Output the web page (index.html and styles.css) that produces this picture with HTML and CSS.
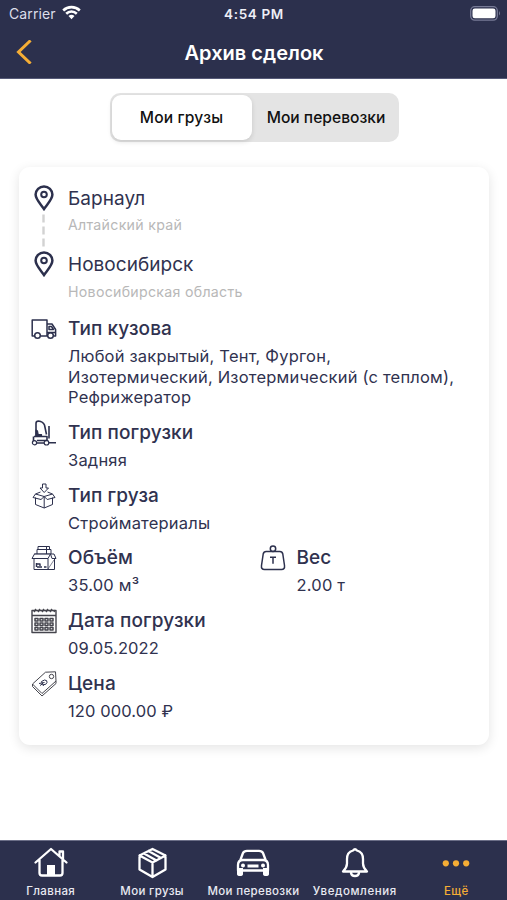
FILE: index.html
```html
<!DOCTYPE html>
<html lang="ru">
<head>
<meta charset="utf-8">
<meta name="viewport" content="width=device-width, initial-scale=1">
<title>Архив сделок</title>
<link rel="stylesheet" href="styles.css">
</head>
<body>
<header class="header">
  <div class="status">
    <div class="carrier"><span>Carrier</span>
      <svg width="19" height="15" viewBox="0 0 19 15" fill="#fff"><path d="M9.500 14.300l3-3.200a4.300 4.300 0 0 0-6 0z"/><g fill="none" stroke="#fff" stroke-width="2.600"><path d="M4.200 8.700a7.600 7.600 0 0 1 10.600 0"/><path d="M1.200 5.500a12 12 0 0 1 16.600 0"/></g></svg>
    </div>
    <span class="time">4:54 PM</span>
    <svg class="battery" width="31" height="15" viewBox="0 0 31 15"><rect x=".7" y=".7" width="26.600" height="13.400" rx="4" fill="none" stroke="#777a96" stroke-width="1.300"/><rect x="2.500" y="2.500" width="23" height="9.800" rx="2.300" fill="#fff"/><path d="M29 5q2 2.300 0 4.600z" fill="#777a96"/></svg>
  </div>
  <div class="titlebar">
    <svg class="back" width="16" height="24" viewBox="0 0 16 24"><path d="M13.500 1.500L2.500 12l11 10.500" fill="none" stroke="#f5ad35" stroke-width="3" stroke-linecap="square"/></svg>
    <h1>Архив сделок</h1>
  </div>
</header>

<main class="content">
  <div class="segments">
    <button class="segment active">Мои грузы</button>
    <button class="segment">Мои перевозки</button>
  </div>

  <section class="card">
    <div class="stop">
      <div class="rail">
        <svg class="pin" width="20" height="26" viewBox="0 0 20 26"><path d="M10 24C7 19.500 1.600 14.500 1.600 9.600a8.400 8.200 0 0 1 16.800 0C18.400 14.500 13 19.500 10 24z"/><circle cx="10" cy="9.500" r="2.800"/></svg>
        <svg class="dashes" width="3" height="34" viewBox="0 0 3 34"><path d="M1.500 1.500v32" stroke="#d2d2d2" stroke-width="2.400" stroke-dasharray="8 4"/></svg>
      </div>
      <div><div class="city">Барнаул</div><div class="region">Алтайский край</div></div>
    </div>
    <div class="stop last">
      <div class="rail">
        <svg class="pin" width="20" height="26" viewBox="0 0 20 26"><path d="M10 24C7 19.500 1.600 14.500 1.600 9.600a8.400 8.200 0 0 1 16.800 0C18.400 14.500 13 19.500 10 24z"/><circle cx="10" cy="9.500" r="2.800"/></svg>
      </div>
      <div><div class="city">Новосибирск</div><div class="region">Новосибирская область</div></div>
    </div>

    <div class="row">
      <svg class="icon" viewBox="0 0 26 26"><g stroke-width="1.500"><path d="M4 20H1.200V4H16v16H9.500M16 8h5l3.600 5.500V20h-2M16 20h1"/><path d="M18 10.500h2.500l2 3H18zM16 16.500h8.500"/><circle cx="6.500" cy="19.500" r="2.800"/><circle cx="19.500" cy="19.500" r="2.800"/></g></svg>
      <div><h2>Тип кузова</h2><p>Любой закрытый, Тент, Фургон, Изотермический, Изотермический (с теплом), Рефрижератор</p></div>
    </div>
    <div class="row">
      <svg class="icon" viewBox="0 0 26 26"><path stroke-width="1.600" d="M5 16V3.500Q5 1 7.500 1q4.500.5 6 4l2 9.500M18 6v12.500M3 16.500h13v4H6M2.500 21v-4.500M6 23h7M17.500 22.800H25"/><path d="M5 10l1.500 1 .7 3.500h3.300v2H5z" fill="#2c304d"/><circle cx="3.500" cy="22.700" r="2.100"/><circle cx="15.500" cy="22.700" r="2.300"/></svg>
      <div><h2>Тип погрузки</h2><p>Задняя</p></div>
    </div>
    <div class="row">
      <svg class="icon thin" viewBox="0 0 26 26"><path d="M11.500 1h3.500v4h2.500L13.200 9.500 9 5h2.500zM4.500 14.500v7l8.700 3.500 8.300-3.500v-7M13.200 13.500V25M4.500 11l8.700 2.500 8.300-2.500M4.500 11l5-2M21.500 11l-5-2M4.500 11L2 14.500l8 2 3.200-3 3 3 7.800-2-2.500-3.500"/></svg>
      <div><h2>Тип груза</h2><p>Стройматериалы</p></div>
    </div>
    <div class="pair">
      <div class="row">
        <svg class="icon thin" viewBox="0 0 26 26"><path d="M3 13v11.500h20.500V13M3.500 9L1 13.500h16L19.500 9zM17 13.500v11M19.500 9H23l2 4.500h-4zM6 9V4.500h14V9M7 4.500v-3h11.500v3M15.500 1.500V9"/><path stroke-width="1.400" d="M5.500 18v4M5.500 19h3.500v2M6 22h5M13 22h2.500"/><path d="M17 24l6-9M3 8.800h17" opacity=".6"/></svg>
        <div><h2>Объём</h2><p>35.00 м³</p></div>
      </div>
      <div class="row">
        <svg class="icon" viewBox="0 0 26 26"><path stroke-width="1.500" d="M6.200 6.500h13.600q2.500 0 3 2.500l1.700 11.500q.5 4-3 4h-17q-3.500 0-3-4L3.200 9q.5-2.500 3-2.500z"/><circle cx="13" cy="3.800" r="2.700" stroke-width="1.500"/><path stroke-width="1.500" d="M10 12.200h6M13 12.200v6.500"/></svg>
        <div><h2>Вес</h2><p>2.00 т</p></div>
      </div>
    </div>
    <div class="row">
      <svg class="icon dark" viewBox="0 0 26 26"><path stroke-width="1.400" d="M1 2.500h24v22H1zM1 7.500h24"/><path stroke-width="1.400" d="M3 4l2-3M7 4l2-3M11 4l2-3M15 4l2-3M19 4l2-3M23 4l1-2"/><g stroke-width="1.500"><path d="M4 10.500h3V13H4zM9 10.500h3V13H9zM14 10.500h3V13h-3zM19 10.500h3V13h-3zM4 15h3v2.500H4zM9 15h3v2.500H9zM14 15h3v2.500h-3zM19 15h3v2.500h-3zM4 19.500h3V22H4zM9 19.500h3V22H9zM14 19.500h3V22h-3zM19 19.500h3V22h-3z"/></g></svg>
      <div><h2>Дата погрузки</h2><p class="figure">09.05.2022</p></div>
    </div>
    <div class="row">
      <svg class="icon dark thin" viewBox="0 0 26 26"><path d="M1.500 13L14.500 1.200 24.500.8 25 10 11 22.500zM1.500 13v2.500L11 25l14-12.500V10"/><circle cx="20.500" cy="5.500" r="2.200"/><path stroke="#2c304d" d="M12.500 15l-2-4.500 3-1.500q3 0 2.500 2.500t-4 2.300M8 12.500l5.500-1M9 14.500l3-2"/></svg>
      <div><h2>Цена</h2><p class="figure">120 000.00 ₽</p></div>
    </div>
  </section>
</main>

<nav class="tabs">
  <a class="tab"><svg width="36" height="32" viewBox="0 0 36 32"><path d="M2.500 15.500L18 2l15.500 13.500M26.500 9V4.500H30v8M6.500 13v13q0 2.500 2.500 2.500h18q2.500 0 2.500-2.500V13"/><path d="M14 28V18h8v10z" fill="#fff" stroke="none"/></svg><span>Главная</span></a>
  <a class="tab"><svg width="36" height="32" viewBox="0 0 36 32"><path d="M18.500 2l13 6.500v14l-13 7.500-13-7.500v-14zM5.500 8.500l13 7 13-7M18.500 15.500V30M10 6.500l12.500 7M14.500 4L27 11"/></svg><span>Мои грузы</span></a>
  <a class="tab"><svg width="36" height="32" viewBox="0 0 36 32"><path d="M5 14l3-8q1-2.200 4-2.200h12q3 0 4 2.200l3 8M8 13h20q5 0 5 5v5.500H3V18q0-5 5-5z"/><g fill="#fff" stroke="none"><path d="M2 21h6v6q0 2-3 2t-3-2zM28 21h6v6q0 2-3 2t-3-2zM12.500 17.500h11v3h-11z"/><circle cx="8" cy="18.500" r="2"/><circle cx="28" cy="18.500" r="2"/></g></svg><span>Мои перевозки</span></a>
  <a class="tab"><svg width="36" height="32" viewBox="0 0 36 32"><path d="M6 24.500q4-4 4-8V12q0-7 6-8.500 2-2.500 4 0 6 1.500 6 8.500v4.500q0 4 4 8zM14 26q.5 3 4 3t4-3"/></svg><span class="notice">Уведомления</span></a>
  <a class="tab current"><svg width="36" height="32" viewBox="0 0 36 32"><g fill="#f5ad35" stroke="none"><circle cx="7.800" cy="16.300" r="3.100"/><circle cx="18" cy="16.300" r="3.100"/><circle cx="28.200" cy="16.300" r="3.100"/></g></svg><span>Ещё</span></a>
</nav>
</body>
</html>
```

FILE: styles.css
```css
* { box-sizing: border-box; }
body { margin: 0; height: 900px; display: flex; flex-direction: column; background: #fff; color: #30324f; font-family: Inter, "Liberation Sans", sans-serif; overflow: hidden; }
svg { display: block; flex: none; }
h1, h2, p { margin: 0; }

.header { height: 79px; flex: none; background: #2c304d; color: #fff; border-bottom: 1px solid #565a78; }
.status { height: 27px; display: grid; grid-template-columns: 1fr auto 1fr; align-items: center; padding: 0 6px 0 9px; font-size: 14px; }
.carrier { display: flex; align-items: center; gap: 6px; color: #dddeea; letter-spacing: .1px; }
.carrier svg { margin-top: -2px; }
.time { font-weight: 600; font-size: 13.5px; letter-spacing: .65px; color: #eeeef6; transform: translateX(-1px); }
.battery { justify-self: end; }
.titlebar { height: 50px; display: grid; grid-template-columns: 16px 1fr 16px; align-items: center; padding: 0 16px; }
h1 { text-align: center; font-size: 20px; line-height: 26px; font-weight: 600; letter-spacing: .02px; padding: 1px 0 0 1px; }

.content { flex: 1; padding: 14px 18px 0 19px; }
.segments { width: 289px; height: 49px; margin: 0 auto 25px; padding: 2px; display: flex; background: #e4e4e4; border-radius: 10px; }
.segment { flex: 1; border: 0; padding: 0 0 0 4px; background: none; color: #111; font: 500 15.6px/20px Inter, sans-serif; border-radius: 9px; white-space: nowrap; }
.segment.active { flex: 0 0 140px; padding: 0; background: #fff; letter-spacing: .15px; box-shadow: 0 2px 5px rgba(0,0,0,.12); }

.card { height: 578px; padding: 18.5px 12px 0; border-radius: 11px; background: #fff; box-shadow: 0 3px 12px rgba(0,0,0,.11); }
.stop, .row { display: grid; grid-template-columns: 25px 1fr; column-gap: 12px; }
.stop { height: 66.75px; }
.stop.last { height: 63.7px; }
.rail { display: flex; flex-direction: column; align-items: center; margin-top: -1px; }
.pin { fill: none; stroke: #2c304d; stroke-width: 2.500; }
.pin circle { stroke-width: 2; }
.dashes { margin-top: 2px; }
.city { font-size: 19px; line-height: 25px; letter-spacing: .04px; }
.region { margin-top: 5.5px; color: #b8b8b8; font-size: 14.2px; line-height: 18px; letter-spacing: .27px; }
.row { margin-bottom: 12.2px; }
.icon { width: 26px; height: 26px; fill: none; stroke: #2c304d; stroke-width: 1.200; stroke-linejoin: round; }
.icon.thin { stroke-width: 1; }
.icon.dark { stroke: #45454d; }
h2 { font-size: 19px; line-height: 25px; font-weight: 500; letter-spacing: .1px; }
p { max-width: 395px; margin-top: 5.1px; font-size: 16.5px; line-height: 20.5px; letter-spacing: .2px; }
p.figure { letter-spacing: .1px; }
.pair { display: grid; grid-template-columns: 228.5px 1fr; }

.tabs { height: 60px; flex: none; display: grid; grid-template-columns: repeat(5, 1fr); background: #2c304d; border-top: 1px solid #6b6e87; color: #e9eaf2; }
.tab { display: flex; flex-direction: column; align-items: center; padding-top: 6px; font-size: 11.5px; line-height: 15px; font-weight: 500; white-space: nowrap; }
.tab span { margin-top: 5px; letter-spacing: .35px; }
.tab .notice { letter-spacing: .6px; }
.tab svg { fill: none; stroke: #fff; stroke-width: 2.300; stroke-linejoin: round; stroke-linecap: round; }
.tab.current { color: #f5ad35; }
```
